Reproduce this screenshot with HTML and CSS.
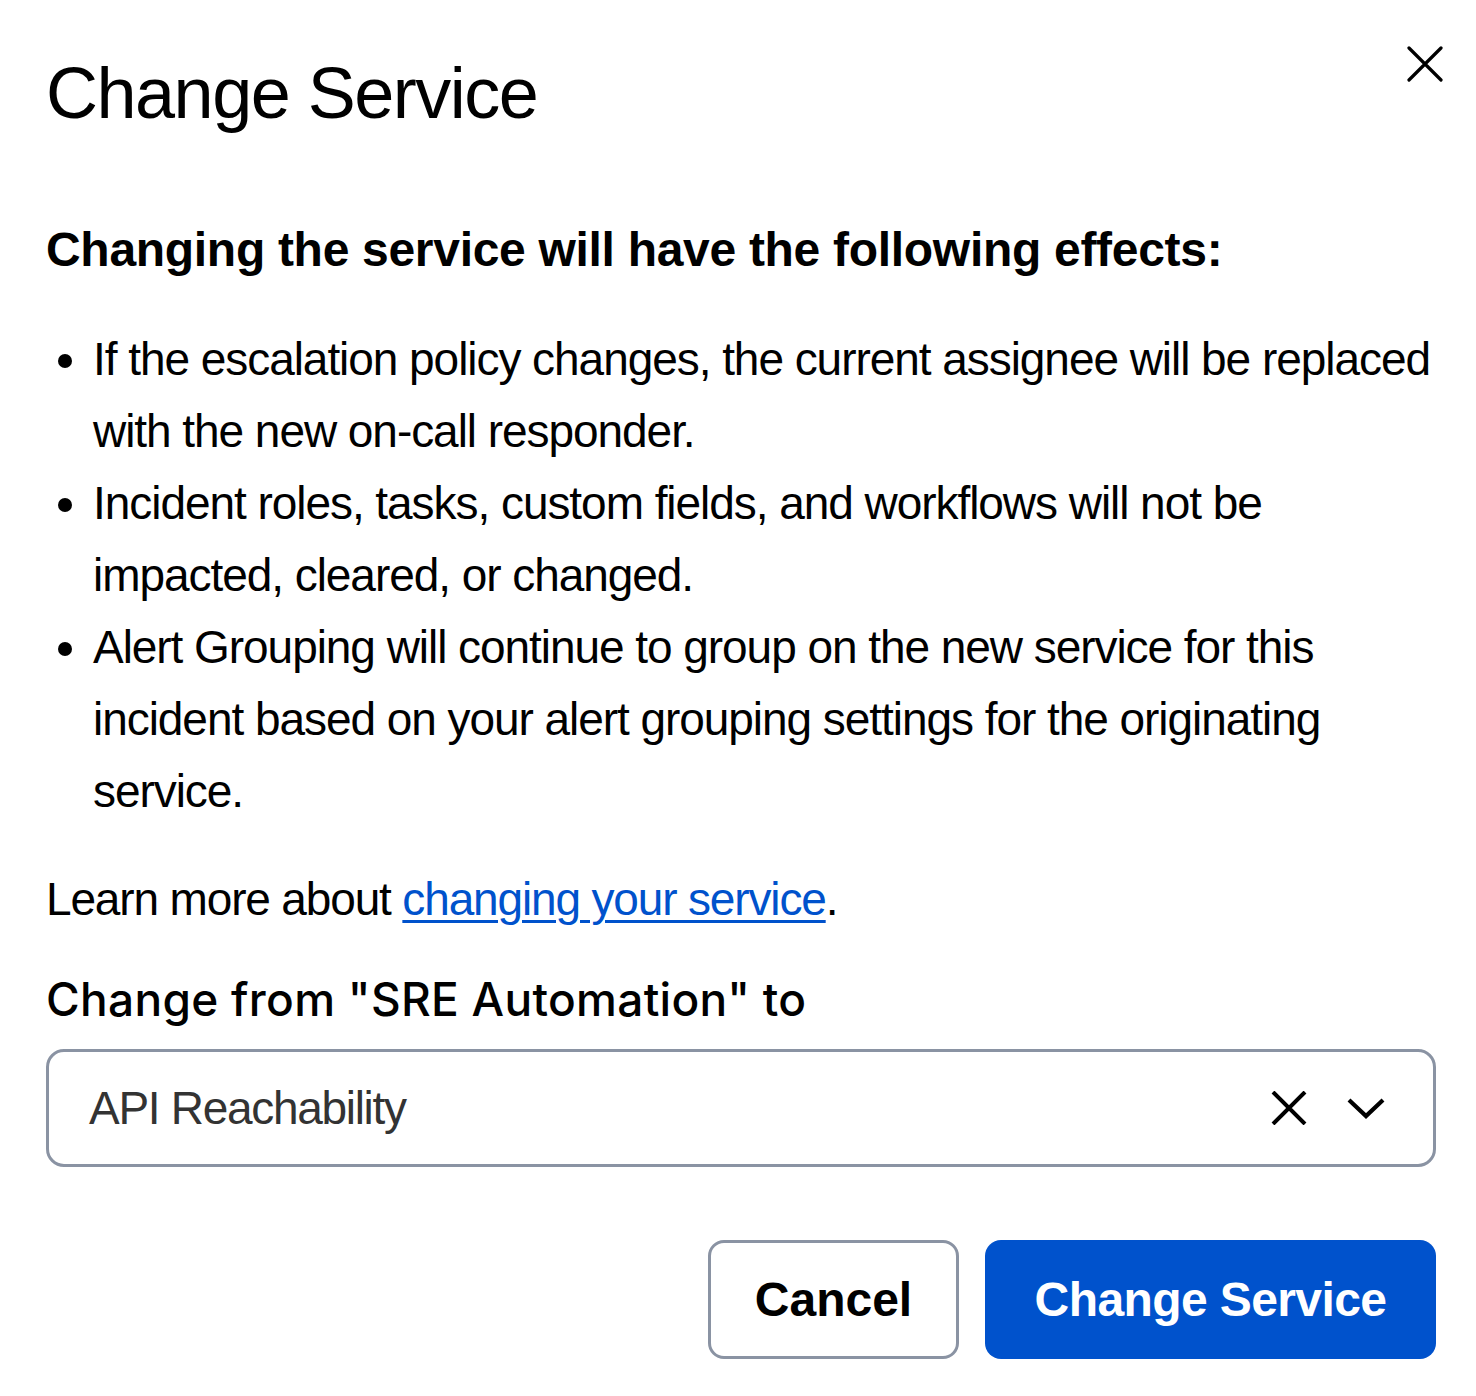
FILE: index.html
```html
<!DOCTYPE html>
<html>
<head>
<meta charset="utf-8">
<link rel="stylesheet" href="styles.css">
</head>
<body>
<div class="dialog">
  <header class="head">
    <h1 class="title">Change Service</h1>
    <button class="close" aria-label="Close">
      <svg viewBox="0 0 36 36" width="36" height="36"><path d="M2 2L34 34M34 2L2 34" stroke="#000" stroke-width="3.2" stroke-linecap="round" fill="none"/></svg>
    </button>
  </header>
  <h2 class="subhead">Changing the service will have the following effects:</h2>
  <ul class="effects">
    <li>If the escalation policy changes, the current assignee will be replaced with the new on-call responder.</li>
    <li>Incident roles, tasks, custom fields, and workflows will not be impacted, cleared, or changed.</li>
    <li>Alert Grouping will continue to group on the new service for this incident based on your alert grouping settings for the originating service.</li>
  </ul>
  <p class="learn">Learn more about <a href="#" class="link">changing your service</a>.</p>
  <label class="label">Change from "SRE Automation" to</label>
  <div class="select">
    <span class="value">API Reachability</span>
    <span class="icons">
      <svg class="clear" viewBox="0 0 36 34" width="36" height="34"><path d="M2 1L34 33M34 1L2 33" stroke="#000" stroke-width="4" fill="none"/></svg>
      <svg class="chev" viewBox="0 0 38 22" width="38" height="22"><path d="M2 3L19 19L36 3" stroke="#000" stroke-width="4.2" fill="none"/></svg>
    </span>
  </div>
  <div class="actions">
    <button class="btn btn-secondary">Cancel</button>
    <button class="btn btn-primary">Change Service</button>
  </div>
</div>
</body>
</html>
```
FILE: styles.css
```css
* { box-sizing: border-box; }
html, body { margin: 0; padding: 0; background: #fff; }
body {
  font-family: "Liberation Sans", Arial, sans-serif;
  color: #000;
}
.dialog {
  width: 1476px;
  padding: 43px 40px 36px 46px;
}
.head {
  display: flex;
  justify-content: space-between;
  align-items: flex-start;
}
.title {
  margin: 0;
  font-size: 72px;
  font-weight: 400;
  line-height: 100px;
  letter-spacing: -1.5px;
}
.close {
  background: none;
  border: 0;
  padding: 0;
  margin: 3px -7px 0 0;
  width: 36px;
  height: 36px;
  cursor: pointer;
}
.close svg { display: block; }
.subhead {
  margin: 77px 0 0 0;
  font-size: 48px;
  font-weight: 700;
  line-height: 60px;
  letter-spacing: -0.3px;
}
.effects {
  margin: 43px 0 0 0;
  padding: 0 0 0 47px;
  font-size: 46px;
  line-height: 72px;
  letter-spacing: -1.05px;
}
.learn {
  margin: 36px 0 0 0;
  font-size: 46px;
  line-height: 72px;
  letter-spacing: -1.15px;
}
.link { color: #0052cc; text-decoration: underline; text-underline-offset: 5px; text-decoration-thickness: 3px; }
.label {
  display: block;
  margin-top: 34px;
  font-family: Inter, "Liberation Sans", sans-serif;
  font-size: 46px;
  font-weight: 500;
  line-height: 60px;
  letter-spacing: 0.3px;
}
.select {
  margin-top: 20px;
  height: 118px;
  border: 3px solid #8a93a3;
  border-radius: 18px;
  display: flex;
  align-items: center;
  justify-content: space-between;
  padding: 0 48px 0 40px;
}
.value {
  font-size: 46px;
  color: #333;
  letter-spacing: -1.3px;
}
.icons { display: flex; align-items: center; gap: 40px; }
.icons svg { display: block; }
.actions {
  margin-top: 73px;
  display: flex;
  justify-content: flex-end;
  gap: 26px;
}
.btn {
  height: 119px;
  border-radius: 16px;
  font-family: "Liberation Sans", Arial, sans-serif;
  font-size: 48px;
  font-weight: 700;
  padding: 0;
  white-space: nowrap;
  cursor: pointer;
}
.btn-secondary {
  background: #fff;
  border: 3px solid #8a93a3;
  color: #000;
  width: 251px;
}
.btn-primary {
  background: #0052cc;
  border: 0;
  color: #fff;
  width: 451px;
  letter-spacing: -0.6px;
}
```
